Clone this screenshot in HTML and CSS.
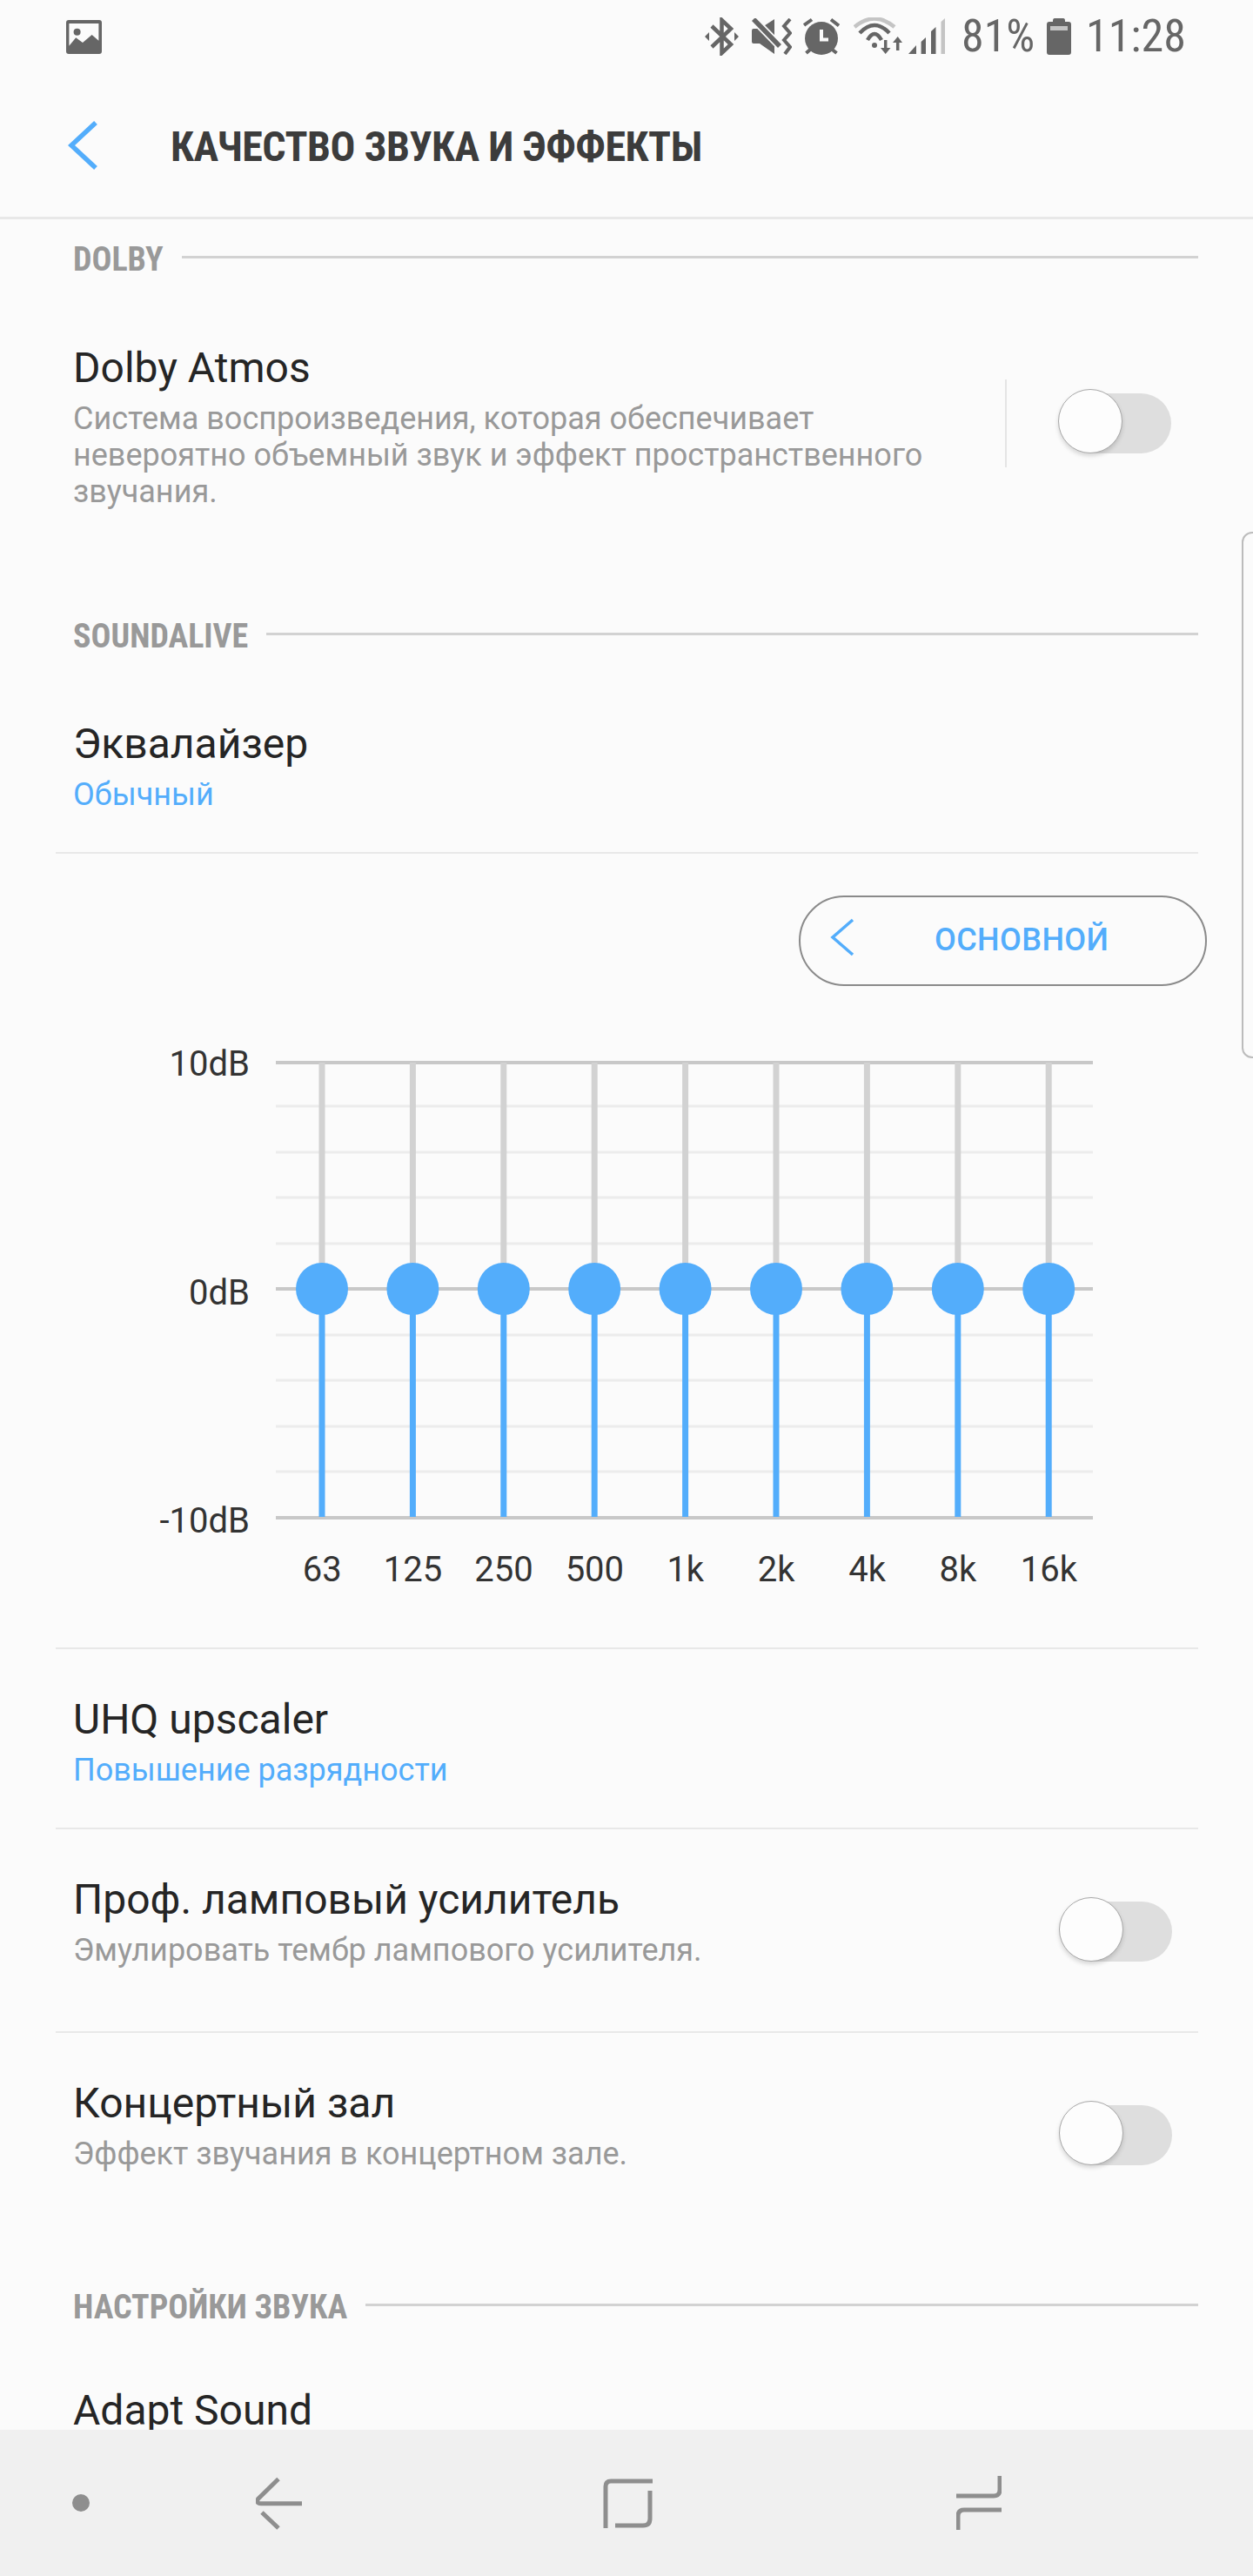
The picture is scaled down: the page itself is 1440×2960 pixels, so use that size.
FILE: index.html
```html
<!DOCTYPE html>
<html lang="ru">
<head>
    <meta charset="UTF-8">
    <meta name="viewport" content="width=device-width, initial-scale=1.0">
    <title>Качество звука и эффекты</title>
    <link rel="stylesheet" href="styles.css">
</head>
<body>
    <div class="screen">
        <div class="status-bar">
            <svg class="icon-gallery" width="41" height="39" viewBox="0 0 41 39">
                <rect width="41" height="39" rx="3" fill="#666"/>
                <path d="M3.4 4H37.4V23.7L29.6 17L19 26L11.2 20.3L3.4 29.7Z" fill="#fbfbfb"/>
                <circle cx="12.6" cy="13.7" r="4" fill="#666"/>
            </svg>
            <div class="status-icons">
                <svg class="icon-bt" width="39" height="44" viewBox="0 0 39 44">
                    <path d="M8 10L30 31L19.5 41V3L30 13L8 34" fill="none" stroke="#666" stroke-width="4.5"/>
                    <path d="M0 22L5 17V27ZM39 22L34 17V27Z" fill="#666"/>
                </svg>
                <svg class="icon-mute" width="46" height="42" viewBox="0 0 46 42">
                    <path d="M0 14Q0 12 2 12H9L26 1V41L9 29H2Q0 29 0 27Z" fill="#666"/>
                    <path d="M0 -1L36 36" stroke="#fbfbfb" stroke-width="9"/>
                    <path d="M2 1L32 32" stroke="#666" stroke-width="5.5"/>
                    <path d="M44 1L37 9L44 17L37 25L44 33L38 41" fill="none" stroke="#666" stroke-width="4"/>
                </svg>
                <svg class="icon-alarm" width="42" height="44" viewBox="0 0 42 44">
                    <circle cx="21" cy="24" r="19" fill="#666"/>
                    <path d="M1 9L10 2.5M32 2.5L41 9.5M3.5 41L8 37M38.5 41L33.500 37" stroke="#666" stroke-width="4"/>
                    <path d="M21 14V25.500H29" fill="none" stroke="#fbfbfb" stroke-width="4"/>
                </svg>
                <svg class="icon-wifi" width="56" height="44" viewBox="0 0 56 44">
                    <path d="M1 11Q24 -8 47 11" fill="none" stroke="#c4c4c4" stroke-width="4.5"/>
                    <path d="M7 18Q24 0 41 18M16 26Q24 12 32 26" fill="none" stroke="#666" stroke-width="4.5"/>
                    <circle cx="24" cy="32" r="3" fill="#666"/>
                    <path d="M36.700 26V36" stroke="#666" stroke-width="3.500"/>
                    <path d="M31 35H42.500L36.700 42Z" fill="#666"/>
                    <path d="M50.700 28V38" stroke="#666" stroke-width="3.500"/>
                    <path d="M45 29H56L50.700 22Z" fill="#666"/>
                </svg>
                <svg class="icon-signal" width="42" height="44" viewBox="0 0 42 44">
                    <path d="M0 42L9 32V42ZM14.600 42V28L20 23V42ZM26 42V16L31.500 11V42Z" fill="#666"/>
                    <path d="M37.500 42V5L42 1V42Z" fill="#c4c4c4"/>
                </svg>
                <span class="status-text status-pct">81%</span>
                <svg class="icon-battery" width="28" height="42" viewBox="0 0 28 42">
                    <path d="M7 3Q7 0 9 0H19Q21 0 21 3V4H25Q28 4 28 7V39Q28 42 25 42H3Q0 42 0 39V7Q0 4 3 4H7Z" fill="#666"/>
                    <rect x="4" y="9" width="20" height="5" fill="#c4c4c4"/>
                </svg>
                <span class="status-text status-time">11:28</span>
            </div>
        </div>

        <div class="action-bar">
            <svg class="back-arrow" width="36" height="58" viewBox="0 0 36 58">
                <path d="M32 3L4 29L32 55" fill="none" stroke="#53adfb" stroke-width="5.500"/>
            </svg>
            <h1 class="page-title"><span>КАЧЕСТВО ЗВУКА И ЭФФЕКТЫ</span></h1>
        </div>

        <div class="content">
            <div class="section-head first">
                <span>DOLBY</span>
            </div>

            <div class="row row-atmos">
                <div class="row-text">
                    <div class="row-title">Dolby Atmos</div>
                    <div class="row-sub">Система воспроизведения, которая обеспечивает невероятно объемный звук и эффект пространственного звучания.</div>
                </div>
                <div class="row-sep"></div>
                <div class="switch"><div class="switch-knob"></div></div>
            </div>

            <div class="section-head soundalive">
                <span>SOUNDALIVE</span>
            </div>

            <div class="row row-eq">
                <div class="row-title">Эквалайзер</div>
                <div class="row-sub accent">Обычный</div>
            </div>

            <div class="eq-block">
                <div class="preset-row">
                    <div class="preset-pill">
                        <svg class="preset-arrow" width="28" height="44" viewBox="0 0 28 44">
                            <path d="M26 2L3 22L26 42" fill="none" stroke="#53adfb" stroke-width="3.500"/>
                        </svg>
                        <span class="preset-name">ОСНОВНОЙ</span>
                    </div>
                </div>

                <div class="eq-chart">
                    <div class="eq-scale">
                        <span>10dB</span>
                        <span>0dB</span>
                        <span>-10dB</span>
                    </div>
                    <div class="eq-plot">
                        <svg class="eq-svg" width="939" height="527" viewBox="0 0 939 527">
                            <g stroke="#ececec" stroke-width="3">
                                <path d="M0 52H939M0 105H939M0 157H939M0 210H939M0 315H939M0 367H939M0 420H939M0 472H939"/>
                            </g>
                            <g stroke="#c8c8c8" stroke-width="4">
                                <path d="M0 2H939M0 262H939M0 525H939"/>
                            </g>
                            <g stroke="#d2d2d2" stroke-width="7">
                                <path d="M53 2V262M157.400 2V262M261.800 2V262M366.200 2V262M470.600 2V262M575 2V262M679.400 2V262M783.800 2V262M888.200 2V262"/>
                            </g>
                            <g stroke="#53adfb" stroke-width="7">
                                <path d="M53 262V524M157.400 262V524M261.800 262V524M366.200 262V524M470.600 262V524M575 262V524M679.400 262V524M783.800 262V524M888.200 262V524"/>
                            </g>
                            <g fill="#53adfb">
                                <circle cx="53" cy="262" r="30"/>
                                <circle cx="157.400" cy="262" r="30"/>
                                <circle cx="261.800" cy="262" r="30"/>
                                <circle cx="366.200" cy="262" r="30"/>
                                <circle cx="470.600" cy="262" r="30"/>
                                <circle cx="575" cy="262" r="30"/>
                                <circle cx="679.400" cy="262" r="30"/>
                                <circle cx="783.800" cy="262" r="30"/>
                                <circle cx="888.200" cy="262" r="30"/>
                            </g>
                        </svg>
                        <div class="eq-bands">
                            <span>63</span>
                            <span>125</span>
                            <span>250</span>
                            <span>500</span>
                            <span>1k</span>
                            <span>2k</span>
                            <span>4k</span>
                            <span>8k</span>
                            <span>16k</span>
                        </div>
                    </div>
                </div>
            </div>

            <div class="row row-uhq">
                <div class="row-title">UHQ upscaler</div>
                <div class="row-sub accent">Повышение разрядности</div>
            </div>

            <div class="row row-toggle">
                <div class="row-text">
                    <div class="row-title">Проф. ламповый усилитель</div>
                    <div class="row-sub">Эмулировать тембр лампового усилителя.</div>
                </div>
                <div class="switch"><div class="switch-knob"></div></div>
            </div>

            <div class="row row-toggle last">
                <div class="row-text">
                    <div class="row-title">Концертный зал</div>
                    <div class="row-sub">Эффект звучания в концертном зале.</div>
                </div>
                <div class="switch"><div class="switch-knob"></div></div>
            </div>

            <div class="section-head sound-settings">
                <span>НАСТРОЙКИ ЗВУКА</span>
            </div>

            <div class="row row-adapt">
                <div class="row-title">Adapt Sound</div>
            </div>

            <div class="edge-handle"></div>
        </div>

        <div class="nav-bar">
            <div class="nav-dot"></div>
            <svg class="nav-back" width="53" height="61" viewBox="0 0 53 61">
                <path d="M26 2.500L2.500 25.500Q0 30.700 6 30.700H53M7 41L26 59" fill="none" stroke="#8e8e8e" stroke-width="5"/>
            </svg>
            <svg class="nav-recents" width="57" height="60" viewBox="0 0 57 60">
                <path d="M57 5H9Q3 5 3 11V59M54 16V48Q54 56 46 56H14" fill="none" stroke="#8e8e8e" stroke-width="5"/>
            </svg>
            <svg class="nav-apps" width="52" height="62" viewBox="0 0 52 62">
                <path d="M50 0V16Q50 23 43 23H0M52 39H9Q2 39 2 46V62" fill="none" stroke="#8e8e8e" stroke-width="5"/>
            </svg>
        </div>
    </div>
</body>
</html>
```

FILE: styles.css
```css
* {
    margin: 0;
    padding: 0;
    box-sizing: border-box;
    font-family: 'Roboto', 'Noto Sans', sans-serif;
}

body {
    background-color: #fbfbfb;
}

.screen {
    width: 1440px;
    height: 2960px;
    display: flex;
    flex-direction: column;
    overflow: hidden;
    background-color: #fbfbfb;
}

/* status bar */
.status-bar {
    height: 84px;
    flex-shrink: 0;
    display: flex;
    align-items: center;
    justify-content: space-between;
    padding: 0 81px 0 76px;
}

.status-icons {
    display: flex;
    align-items: center;
}

.status-icons svg {
    display: block;
}

.icon-mute {
    margin-left: 15px;
}

.icon-alarm {
    margin-left: 13px;
}

.icon-wifi {
    margin-left: 16px;
}

.icon-signal {
    margin-left: 7px;
}

.status-text {
    font-size: 52px;
    color: #666;
    line-height: 60px;
    font-weight: 400;
    font-stretch: 75%;
}

.status-pct {
    width: 82px;
    margin-left: 19px;
}

.icon-battery {
    margin-left: 16px;
}

.status-time {
    width: 111px;
    margin-left: 17px;
}

/* action bar */
.action-bar {
    height: 168px;
    flex-shrink: 0;
    display: flex;
    align-items: center;
    padding-left: 78px;
    border-bottom: 3px solid #e8e8e8;
}

.page-title {
    margin-left: 82px;
    padding-top: 4px;
    font-size: 48px;
    font-weight: 700;
    font-stretch: 75%;
    letter-spacing: -0.5px;
    color: #3c3c3c;
    white-space: nowrap;
}

/* list */
.content {
    position: relative;
    flex: 1;
    min-height: 0;
    overflow: hidden;
    padding: 0 63px 0 64px;
}

.section-head {
    height: 44px;
    display: flex;
    align-items: center;
    padding-left: 20px;
    gap: 21px;
}

.section-head span {
    font-size: 38px;
    font-weight: 700;
    font-stretch: 75%;
    color: #999;
    white-space: nowrap;
}

.section-head::after {
    content: '';
    flex: 1;
    height: 3px;
    background-color: #d2d2d2;
    margin-top: -6px;
}

.section-head.first {
    margin-top: 24px;
}

.section-head.soundalive {
    margin-top: 125px;
}

.section-head.sound-settings {
    margin-top: 59px;
}

.row {
    padding-left: 20px;
    border-bottom: 2px solid #e8e8e8;
}

.row-title {
    font-size: 48px;
    line-height: 56px;
    color: #252525;
}

.row-sub {
    margin-top: 9px;
    font-size: 36px;
    line-height: 42px;
    color: #999;
}

.row-sub.accent {
    color: #53adfb;
}

.row-atmos {
    margin-top: 75px;
    display: flex;
    border-bottom: none;
    height: 189px;
}

.row-atmos .row-text {
    width: 1000px;
}

.row-sep {
    width: 2px;
    height: 101px;
    margin: 41px 0 0 71px;
    background-color: #e5e5e5;
}

.row-atmos .switch {
    margin: 57px 0 0 65px;
}

.row-eq {
    margin-top: 74px;
    padding-bottom: 45px;
}

.row-uhq {
    padding-top: 53px;
    padding-bottom: 45px;
}

.row-toggle {
    height: 234px;
    padding-top: 53px;
    display: flex;
    justify-content: space-between;
}

.row-toggle.last {
    border-bottom: none;
}

.row-toggle .switch {
    margin: 30px 30px 0 0;
}

.row-adapt {
    margin-top: 69px;
    border-bottom: none;
}

/* switch */
.switch {
    position: relative;
    width: 124px;
    height: 69px;
    flex-shrink: 0;
    border-radius: 35px;
    background-color: #dedede;
}

.switch-knob {
    position: absolute;
    left: -6px;
    top: -5px;
    width: 74px;
    height: 74px;
    border-radius: 50%;
    background-color: #fdfdfd;
    border: 1px solid #a8a8a8;
    box-shadow: 0 3px 5px rgba(0, 0, 0, 0.15);
}

/* equalizer */
.eq-block {
    padding-top: 48px;
    border-bottom: 2px solid #e8e8e8;
}

.preset-row {
    display: flex;
    justify-content: flex-end;
    margin-right: -10px;
}

.preset-pill {
    width: 469px;
    height: 104px;
    display: flex;
    align-items: center;
    padding-left: 34px;
    border: 2px solid #8a8a8a;
    border-radius: 52px;
}

.preset-arrow {
    display: block;
    margin-top: -8px;
}

.preset-name {
    margin-left: 92px;
    margin-top: -2px;
    font-size: 36px;
    font-weight: 500;
    letter-spacing: 0.4px;
    color: #53adfb;
}

.eq-chart {
    display: flex;
    margin-top: 65px;
    padding-bottom: 64px;
}

.eq-scale {
    width: 223px;
    height: 575px;
    display: flex;
    flex-direction: column;
    justify-content: space-between;
    text-align: right;
    font-size: 40px;
    line-height: 50px;
    color: #333;
}

.eq-plot {
    margin-left: 30px;
    padding-top: 21px;
}

.eq-svg {
    display: block;
}

.eq-bands {
    display: grid;
    grid-template-columns: repeat(9, 104.4px);
    margin-top: 33px;
    margin-left: 1px;
    text-align: center;
    font-size: 40px;
    line-height: 50px;
    color: #333;
}

/* scroll handle on the right edge */
.edge-handle {
    position: absolute;
    top: 359px;
    right: -12px;
    width: 25px;
    height: 605px;
    border: 2px solid #bcbcbc;
    border-radius: 12px;
}

/* nav bar */
.nav-bar {
    height: 168px;
    flex-shrink: 0;
    display: flex;
    align-items: center;
    padding-left: 83px;
    background-color: #f0f0f0;
}

.nav-bar svg {
    display: block;
}

.nav-dot {
    width: 20px;
    height: 20px;
    border-radius: 50%;
    background-color: #8e8e8e;
}

.nav-back {
    margin-left: 191px;
}

.nav-recents {
    margin-left: 346px;
}

.nav-apps {
    margin-left: 349px;
}
```
